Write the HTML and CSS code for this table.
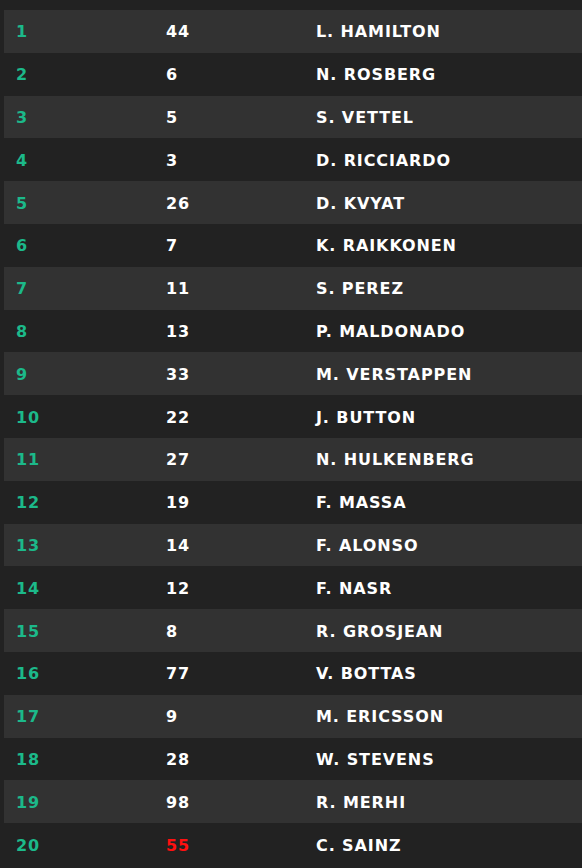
FILE: index.html
```html
<!DOCTYPE html>
<html>
<head>
<meta charset="utf-8">
<link rel="stylesheet" href="styles.css">
</head>
<body>
<div class="grid">
<table class="results">
<tbody>
<tr><td class="pos">1</td><td class="num">44</td><td class="name">L. HAMILTON</td></tr>
<tr><td class="pos">2</td><td class="num">6</td><td class="name">N. ROSBERG</td></tr>
<tr><td class="pos">3</td><td class="num">5</td><td class="name">S. VETTEL</td></tr>
<tr><td class="pos">4</td><td class="num">3</td><td class="name">D. RICCIARDO</td></tr>
<tr><td class="pos">5</td><td class="num">26</td><td class="name">D. KVYAT</td></tr>
<tr><td class="pos">6</td><td class="num">7</td><td class="name">K. RAIKKONEN</td></tr>
<tr><td class="pos">7</td><td class="num">11</td><td class="name">S. PEREZ</td></tr>
<tr><td class="pos">8</td><td class="num">13</td><td class="name">P. MALDONADO</td></tr>
<tr><td class="pos">9</td><td class="num">33</td><td class="name">M. VERSTAPPEN</td></tr>
<tr><td class="pos">10</td><td class="num">22</td><td class="name">J. BUTTON</td></tr>
<tr><td class="pos">11</td><td class="num">27</td><td class="name">N. HULKENBERG</td></tr>
<tr><td class="pos">12</td><td class="num">19</td><td class="name">F. MASSA</td></tr>
<tr><td class="pos">13</td><td class="num">14</td><td class="name">F. ALONSO</td></tr>
<tr><td class="pos">14</td><td class="num">12</td><td class="name">F. NASR</td></tr>
<tr><td class="pos">15</td><td class="num">8</td><td class="name">R. GROSJEAN</td></tr>
<tr><td class="pos">16</td><td class="num">77</td><td class="name">V. BOTTAS</td></tr>
<tr><td class="pos">17</td><td class="num">9</td><td class="name">M. ERICSSON</td></tr>
<tr><td class="pos">18</td><td class="num">28</td><td class="name">W. STEVENS</td></tr>
<tr><td class="pos">19</td><td class="num">98</td><td class="name">R. MERHI</td></tr>
<tr><td class="pos">20</td><td class="num red">55</td><td class="name">C. SAINZ</td></tr>
</tbody>
</table>
</div>
</body>
</html>
```
FILE: styles.css
```css
html, body {
  margin: 0;
  padding: 0;
  background: #222222;
}
.grid {
  padding: 10px 0 0 4px;
}
.results {
  width: 100%;
  border-collapse: collapse;
  font-family: "DejaVu Sans", sans-serif;
  font-weight: bold;
  font-size: 16px;
  letter-spacing: 0.9px;
  color: #ffffff;
}
.results tr {
  height: 42.8px;
}
.results tr:nth-child(odd) {
  background: #323232;
}
.results td {
  padding: 2px 0 0 12px;
  vertical-align: middle;
  line-height: 1;
}
.pos {
  width: 138px;
  color: #1cb98a;
}
.num {
  width: 138px;
}
.red {
  color: #ff1010;
}
```
